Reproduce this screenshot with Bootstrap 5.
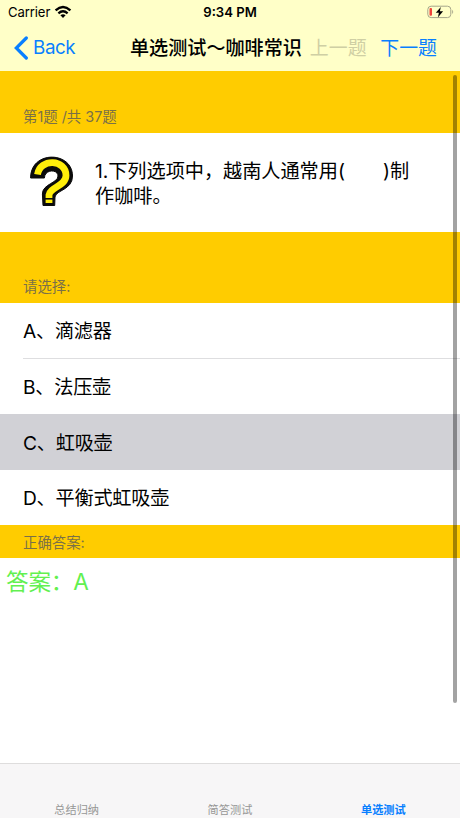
<!DOCTYPE html>
<html lang="zh-CN">
<head>
<meta charset="utf-8">
<meta name="viewport" content="width=device-width, initial-scale=1">
<title>单选测试～咖啡常识</title>
<link href="https://cdn.jsdelivr.net/npm/bootstrap@5.3.0/dist/css/bootstrap.min.css" rel="stylesheet">
<style>
  body { font-family: Inter, "Noto Sans CJK SC", sans-serif; font-size: 19.2px; line-height: 25px; color: #000; }
  svg { display: block; flex: none; }
  .screen { height: 818px; }
  .topbar { height: 71px; background: #ffffc8; }
  .status { height: 24px; font-size: 13.1px; line-height: 24px; padding: 0 6px 0 8px; }
  .status > * { flex: 1 1 0; }
  .carrier { letter-spacing: -.1px; }
  .clock { padding-right: 2px; }
  .navrow { height: 47px; padding: 0 23px 0 14px; white-space: nowrap; }
  .ios-blue { color: #087fff; }
  .back-text { font-size: 18.8px; letter-spacing: -.4px; width: 43px; }
  .nav-title { font-weight: 500; font-size: 19.1px; margin-left: 54px; padding-top: 2px; }
  .prev { color: #cfcfa4; margin-left: 8px; font-size: 18.9px; padding-top: 2px; }
  .next { margin-left: auto; font-size: 18.9px; padding-top: 2px; }
  .band { background: #fc0; color: #7a7048; font-size: 14.4px; line-height: 20px; padding: 0 23px 6px; }
  .band-progress { height: 62px; }
  .band-choose { height: 71px; }
  .band-answer { height: 33px; padding-bottom: 5px; }
  .question { height: 99px; padding-left: 29px; }
  .question p { margin-left: 21px; width: 325px; padding-top: 3px; letter-spacing: -.05px; }
  .choice { height: 55.5px; padding: 3px 0 0; margin: 0 0 0 23px; border: 0; background: transparent; letter-spacing: -.25px; }
  .choice-line { border-bottom: 1px solid #dedee0; }
  .picked { background: #d1d1d6; }
  .answer { color: #62f050; font-size: 22.6px; letter-spacing: -.2px; line-height: 30px; padding: 9px 6px 0; }
  .tabs { height: 55px; background: #f7f6f7; border-top: 1px solid #dedddd; font-size: 11.2px; line-height: 16px; color: #969696; }
  .thumb { width: 4px; height: 628px; right: 3px; top: 75px; border-radius: 2px; background: rgba(0,0,0,.36); }
</style>
</head>
<body>
<div class="screen d-flex flex-column position-relative overflow-hidden bg-white">
  <header class="topbar">
    <div class="status d-flex align-items-center">
      <div class="carrier d-flex align-items-center gap-1"><span>Carrier</span>
        <svg width="18" height="14" viewBox="0 0 18 14" fill="none" stroke="#000" stroke-width="2.4"><path d="M1.6 5.4Q9-1.3 16.4 5.4M4.4 8.3Q9 4.3 13.6 8.3"/><path d="M6.4 10.2Q9 8.2 11.6 10.2L9 12.9Z" fill="#000" stroke="none"/></svg>
      </div>
      <div class="clock text-center fw-semibold">9:34 PM</div>
      <div class="d-flex justify-content-end">
        <svg width="27" height="14" viewBox="0 0 27 14"><rect x=".8" y="1.2" width="23" height="11.4" rx="3.3" fill="none" stroke="#a6a68a"/><path d="M25.2 4.8q2 2.1 0 4.2z" fill="#a6a68a"/><rect x="2.5" y="3" width="2.5" height="7.8" rx="1" fill="#f0453a"/><path d="M13.8 2 8.8 7.7h3.1l-1 4.7 5.2-6.1h-3.2z" fill="#000"/></svg>
      </div>
    </div>
    <nav class="navrow d-flex align-items-center">
      <a class="ios-blue d-flex align-items-center text-decoration-none" href="#">
        <svg width="15" height="24" viewBox="0 0 15 24" fill="none" stroke="#087fff" stroke-width="3.2" stroke-linecap="round"><path d="M12.3 2 2.3 12l10 10"/></svg>
        <span class="back-text ms-1">Back</span></a>
      <span class="nav-title">单选测试～咖啡常识</span>
      <span class="prev">上一题</span>
      <a class="next ios-blue text-decoration-none" href="#">下一题</a>
    </nav>
  </header>
  <main class="flex-grow-1">
    <div class="band band-progress d-flex align-items-end">第1题 /共 37题</div>
    <section class="question d-flex align-items-center">
      <svg width="45" height="53" viewBox="0 0 45 53" fill="none"><path d="M1.600 22C1.600-6 43.500-5 43.500 20C43.500 34 27 34 26 41L25.700 49.500H14L13.400 38C13.400 28 29 27 29 20C29 13 15.600 13 15.400 22Z" fill="#0b0b0b" stroke="#0b0b0b" stroke-linejoin="round"/><path d="M8.500 18.500C11 2 37 3 37 19.500C37 30 21 31 20 39V47" stroke="#ffee0a" stroke-width="6.800"/><path d="M16 42.800h8" stroke="#0b0b0b" stroke-width="1.600"/></svg>
      <p class="mb-0">1.下列选项中，越南人通常用(　　)制作咖啡。</p>
    </section>
    <div class="band band-choose d-flex align-items-end">请选择:</div>
    <div>
      <div class="choice choice-line d-flex align-items-center">A、滴滤器</div>
      <div class="choice d-flex align-items-center">B、法压壶</div>
      <div class="picked"><div class="choice d-flex align-items-center">C、虹吸壶</div></div>
      <div class="choice d-flex align-items-center">D、平衡式虹吸壶</div>
    </div>
    <div class="band band-answer d-flex align-items-end">正确答案:</div>
    <div class="answer">答案：A</div>
  </main>
  <div class="thumb position-absolute"></div>
  <footer class="tabs nav nav-fill flex-nowrap align-items-end">
    <div class="nav-item">总结归纳</div>
    <div class="nav-item">简答测试</div>
    <div class="nav-item ios-blue fw-bold">单选测试</div>
  </footer>
</div>
<script src="https://cdn.jsdelivr.net/npm/bootstrap@5.3.0/dist/js/bootstrap.bundle.min.js"></script>
</body>
</html>
